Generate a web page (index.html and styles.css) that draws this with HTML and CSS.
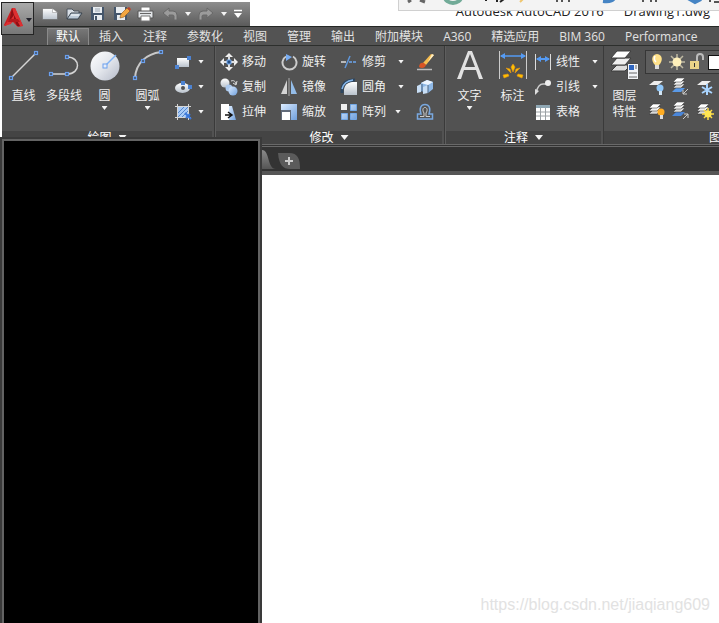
FILE: index.html
```html
<!DOCTYPE html>
<html lang="zh-CN">
<head>
<meta charset="utf-8">
<title>Autodesk AutoCAD 2016</title>
<link rel="stylesheet" href="styles.css">
</head>
<body>
<svg class="defs" aria-hidden="true">
  <defs>
    <linearGradient id="silver" x1="0" y1="0" x2="0" y2="1"><stop offset="0" stop-color="#fff"/><stop offset="1" stop-color="#b9c2cc"/></linearGradient>
    <linearGradient id="disc" x1="0" y1="0" x2="1" y2="1"><stop offset="0" stop-color="#fff"/><stop offset=".5" stop-color="#e3e6ec"/><stop offset="1" stop-color="#b4bac8"/></linearGradient>
    <linearGradient id="blue" x1="0" y1="0" x2="1" y2="1"><stop offset="0" stop-color="#dcecff"/><stop offset="1" stop-color="#6f9fdc"/></linearGradient>
    <linearGradient id="tabfill" x1="0" y1="0" x2="0" y2="1"><stop offset="0" stop-color="#8a8a8a"/><stop offset="1" stop-color="#555"/></linearGradient>
    <g id="node"><rect x="-1.5" y="-1.5" width="3" height="3" fill="#46566b" stroke="#6ba0ee" stroke-width="1.2"/></g>
    <g id="sheets">
      <path d="M4 8h8l-4 4H0z" fill="#d9d9d9" stroke="#333" stroke-width=".5"/>
      <path d="M4 5h8l-4 4H0z" fill="#eee" stroke="#333" stroke-width=".5"/>
      <path d="M4 2h8l-4 4H0z" fill="#fff" stroke="#333" stroke-width=".5"/>
    </g>
  </defs>
</svg>

<header class="titlebar">
  <nav class="quick">
    <button aria-label="新建"><svg width="18" height="16"><path d="M1.500 2.500h10l5 4v7h-15z" fill="url(#silver)" stroke="#666" stroke-width=".6"/><path d="M11.500 2.500l5 4h-5z" fill="#fff" stroke="#888" stroke-width=".5"/></svg></button>
    <button aria-label="打开"><svg width="18" height="16"><path d="M2 13V3h5l2 2h5v3H7z" fill="#d9dfe6" stroke="#4b535c"/><path d="M2 13l4-6h11l-4 6z" fill="#bdcbd9" stroke="#39434d"/><path d="M6 9h8" stroke="#fff"/></svg></button>
    <button aria-label="保存"><svg width="18" height="16"><path d="M2 1h13v13H2z" fill="#45566b"/><path d="M4 1h9v6H4zM5 9h8v5H5z" fill="#e9edf1"/><path d="M6 3h5M6 5h5" stroke="#9ca8b5"/><path d="M6 10h2v4H6z" fill="#45566b"/></svg></button>
    <button aria-label="另存为"><svg width="18" height="16"><path d="M1 1h13v13H1z" fill="#45566b"/><path d="M3 1h9v6H3zM4 9h8v5H4z" fill="#e9edf1"/><path d="M7 12l1-4 6-6 3 3-6 6z" fill="#f4a742" stroke="#8d581b" stroke-width=".6"/><path d="M14 2l3 3 1-2-2-2z" fill="#b9432e"/></svg></button>
    <button aria-label="打印"><svg width="18" height="16"><path d="M4 1h9v5H4z" fill="#fff" stroke="#777"/><path d="M1 5h15v7H1z" fill="#e2e5e8" stroke="#555"/><path d="M4 10h9v5H4z" fill="#fff" stroke="#777"/><path d="M3 7.500h11" stroke="#666"/></svg></button>
    <button aria-label="放弃"><svg width="18" height="16"><path d="M2 7l6-5v3h4q4 0 4 4v5h-3v-4q0-1-2-1H8v3z" fill="#9b9b9b" stroke="#686868"/></svg></button>
    <button class="drop" aria-label="放弃列表"><i class="caret"></i></button>
    <button aria-label="重做"><svg width="18" height="16"><path d="M16 7l-6-5v3H6q-4 0-4 4v5h3v-4q0-1 2-1h3v3z" fill="#9b9b9b" stroke="#686868"/></svg></button>
    <button class="drop" aria-label="重做列表"><i class="caret"></i></button>
    <button aria-label="自定义快速访问工具栏"><svg width="10" height="12"><path d="M1 2.500h8" stroke="#fff" stroke-width="1.500"/><path d="M1 5h8L5 10z" fill="#fff"/></svg></button>
  </nav>
  <h1 class="caption"><span>Autodesk AutoCAD 2016</span><span>Drawing1.dwg</span></h1>
</header>

<button class="app" aria-label="应用程序菜单">
  <svg width="30" height="28"><path d="M9 3h3l8 18-5 1-5-5-8 4-1-1z" fill="#c91f22"/><path d="M9 3l1 7-9 11 7-2 3-6 4 8 5 0L12 3z" fill="#dd2f31"/><path d="M9 3l2 7-5 7zM11 10l6 11-3 0-3-7z" fill="#8f1015"/><path d="M6 14h9l2 3H5z" fill="#b5191d"/><path d="M23 13h6l-3 4z" fill="#23232d"/></svg>
</button>

<nav class="tabs">
  <a class="active" href="#">默认</a><a href="#">插入</a><a href="#">注释</a><a href="#">参数化</a><a href="#">视图</a><a href="#">管理</a><a href="#">输出</a><a href="#">附加模块</a><a href="#">A360</a><a href="#">精选应用</a><a href="#">BIM 360</a><a href="#">Performance</a>
</nav>

<main class="ribbon">
  <section class="panel draw">
    <div class="tools">
      <button class="big"><svg width="32" height="32"><path d="M3 28L28 3" stroke="#d5d5d5" stroke-width="1.500"/><use href="#node" x="3" y="28"/><use href="#node" x="28" y="3"/></svg>直线</button>
      <button class="big mid"><svg width="32" height="32"><path d="M3 24h16c14 0 14-17 0-17" fill="none" stroke="#d5d5d5" stroke-width="1.500"/><use href="#node" x="3" y="24"/><use href="#node" x="19" y="24"/><use href="#node" x="19" y="7"/></svg>多段线</button>
      <button class="big"><svg width="32" height="32"><circle cx="16" cy="16" r="14.500" fill="url(#disc)"/><path d="M16 16L27 5" stroke="#7eb2f5" stroke-width="1.500"/><rect x="14" y="14" width="4" height="4" fill="#e7edf8" stroke="#6ba0ee"/></svg>圆<i class="caret"></i></button>
      <button class="big"><svg width="32" height="32"><path d="M3 28C4 13 14 4 29 2" fill="none" stroke="#c9c9c9" stroke-width="2"/><use href="#node" x="3" y="28"/><use href="#node" x="11" y="11"/><use href="#node" x="29" y="2"/></svg>圆弧<i class="caret"></i></button>
      <div class="stack">
        <button class="small" aria-label="矩形"><svg width="18" height="18"><path d="M3 5h12v9H3z" fill="url(#silver)"/><path d="M1 12h4v4H1zM13 3h4v4h-4z" fill="#4d83d2"/></svg><i class="caret"></i></button>
        <button class="small" aria-label="椭圆"><svg width="18" height="18"><ellipse cx="8.500" cy="10" rx="7.500" ry="5" fill="url(#silver)"/><path d="M7 3h4v4H7zM14 7h4v4h-4z" fill="#4d83d2"/><circle cx="9" cy="10" r="2" fill="#525252"/></svg><i class="caret"></i></button>
        <button class="small" aria-label="图案填充"><svg width="18" height="18"><path d="M3 3h11v12H3z" fill="#a9cbf7"/><path d="M4 10l6-6M4 14L14 4M8 14l6-6" stroke="#5587cc"/><path d="M3.500 1v16M14.500 1v16M1 3.500h16M1 14.500h16" stroke="#d6d6d6"/><path d="M11 10l6 6M12 15l4-4" stroke="#3977db" stroke-width="2"/></svg><i class="caret"></i></button>
      </div>
    </div>
    <h2>绘图<i class="caret wide"></i></h2>
  </section>

  <section class="panel modify">
    <div class="tools">
      <div class="stack">
        <button class="small"><svg width="18" height="18"><path d="M9 0l4 4H5zM9 18l4-4H5zM0 9l4-4v8zM18 9l-4-4v8z" fill="#f1f1f1"/><path d="M9 3v4M9 11v4M3 9h4M11 9h4" stroke="#ddd" stroke-width="2"/><path d="M7 7h4v4H7z" fill="#244d82" stroke="#76adf2"/></svg>移动</button>
        <button class="small"><svg width="18" height="18"><circle cx="5" cy="5" r="4.500" fill="url(#silver)"/><circle cx="9" cy="10" r="3.500" fill="#aac8ee"/><circle cx="13" cy="13" r="4.500" fill="url(#blue)"/><path d="M11 3c3-1 4 0 5 3M13 5l3 2 1-4" fill="none" stroke="#ddd"/></svg>复制</button>
        <button class="small"><svg width="18" height="18"><path d="M1 1h8v16H1z" fill="#fff"/><path d="M9 3l3 0 4 14H9z" fill="url(#blue)"/><path d="M5 12h7M8 9l4 3-4 3" fill="none" stroke="#111" stroke-width="1.500"/></svg>拉伸</button>
      </div>
      <div class="stack">
        <button class="small"><svg width="18" height="18"><path d="M6 3.500a7 7 0 1 0 7 0" fill="none" stroke="#ccc" stroke-width="2"/><path d="M6 1l6 3-6 4z" fill="#79aef4"/></svg>旋转</button>
        <button class="small"><svg width="18" height="18"><path d="M7 2v14H1z" fill="#d4d4d4"/><path d="M11 2v14h6z" fill="#94bde9"/><path d="M9 0v18" stroke="#aaa"/></svg>镜像</button>
        <button class="small"><svg width="18" height="18"><path d="M1 1h16v16H1z" fill="url(#blue)"/><path d="M1 7h10v10H1z" fill="#616b7a"/><path d="M2 9h8v8H2z" fill="#fff"/></svg>缩放</button>
      </div>
      <div class="stack">
        <button class="small"><svg width="18" height="18"><path d="M1 9h5" stroke="#ddd" stroke-width="1.500"/><path d="M5 15L10 3" stroke="#5f97db" stroke-width="1.500"/><path d="M9 9h8" stroke="#6ca7ef" stroke-width="1.500" stroke-dasharray="3 1"/></svg>修剪<i class="caret"></i></button>
        <button class="small"><svg width="18" height="18"><path d="M4 17V11Q5 5 12 4h5v13z" fill="url(#silver)"/><path d="M2 15V11Q3 2 15 2" fill="none" stroke="#2d4660" stroke-width="3"/><path d="M2 11Q4 3 13 2" fill="none" stroke="#88b9ee" stroke-width="1.500"/></svg>圆角<i class="caret"></i></button>
        <button class="small tight"><svg width="18" height="18"><path d="M1 1h6v6H1z" fill="#eee"/><path d="M10.500 1.500h6v6h-6zM1.500 10.500h6v6h-6zM10.500 10.500h6v6h-6z" fill="url(#blue)" stroke="#73a8e6"/></svg>阵列<i class="caret"></i></button>
      </div>
      <div class="stack">
        <button class="small" aria-label="删除"><svg width="18" height="18"><path d="M7 10L15 1l3 1-8 10z" fill="#f6bd4f"/><path d="M16 1l2 1-6 7z" fill="#fff0c8"/><path d="M3 14c0-4 3-5 5-4l2 2c-1 3-4 4-7 2z" fill="#d75425"/><path d="M1 16.500h15" stroke="#bbb" stroke-width="1.500"/></svg></button>
        <button class="small" aria-label="分解"><svg width="18" height="18"><path d="M5 5l6-3 6 2v7l-5 4-7-2z" fill="#8fb9e7"/><path d="M5 5l6-3 6 2-5 3z" fill="#edf5ff"/><path d="M1 8l4-2v8l-4 1zM7 9l5-2v8l-5 1z" fill="#c8def5"/><path d="M12 7v8M6 6v8" stroke="#4d6783"/></svg></button>
        <button class="small" aria-label="偏移"><svg width="18" height="18"><path d="M1.500 16v-5H5C3 5 5 1.500 9 1.500S15 5 13 11h3.500v5z" fill="none" stroke="#79a8df" stroke-width="1.500"/><path d="M4 13.500h4V10C6 7 7 4.500 9 4.500S12 7 10 10v3.500h4" fill="none" stroke="#ccc"/></svg></button>
      </div>
    </div>
    <h2>修改<i class="caret wide"></i></h2>
  </section>

  <section class="panel annotate">
    <div class="tools">
      <button class="big"><svg width="32" height="32"><path d="M3 29L14 1h4l11 28h-4l-3-9H10l-3 9zM11 17h10L16 4z" fill="#e1e1e1" fill-rule="evenodd"/></svg>文字<i class="caret"></i></button>
      <button class="big"><svg width="32" height="32"><path d="M2.500 1v28M29.500 1v28" stroke="#ccc"/><path d="M4 6h24" stroke="#559bf4" stroke-width="1.500"/><path d="M3 6l5-3v6zM29 6l-5-3v6z" fill="#559bf4"/><path d="M14 17l2-3 2 3-2 5zM9 18l4 1 1 4zM23 18l-4 1-1 4zM6 25l5-1 1 2-5 2zM26 25l-5-1-1 2 5 2z" fill="#ffc000" stroke="#e79516" stroke-width=".6"/></svg>标注</button>
      <div class="stack">
        <button class="small"><svg width="18" height="18"><path d="M1.500 1v16M16.500 1v16" stroke="#ddd"/><path d="M3 6h12" stroke="#559bf4" stroke-width="2"/><path d="M2 6l5-3v6zM16 6l-5-3v6z" fill="#559bf4"/></svg>线性<i class="caret"></i></button>
        <button class="small"><svg width="18" height="18"><path d="M2 15Q4 6 9 6h4" fill="none" stroke="#ccc" stroke-width="1.500"/><circle cx="14" cy="5" r="3" fill="#eee"/><path d="M1 17v-6l4 2z" fill="#ddd"/></svg>引线<i class="caret"></i></button>
        <button class="small"><svg width="18" height="18"><path d="M2 2h14v15H2z" fill="#fff"/><path d="M2 2h14v3H2z" fill="#8fa7b4"/><path d="M2 9h14M2 13h14M6.500 5v12M11.500 5v12" stroke="#9aa0a4"/></svg>表格</button>
      </div>
    </div>
    <h2>注释<i class="caret wide"></i></h2>
  </section>

  <section class="panel layers">
    <div class="tools">
      <button class="big props"><svg width="32" height="32"><path d="M8 15h14l-6 6H2z" fill="#ddd" stroke="#3d3d3d"/><path d="M8 8h14l-6 7H2z" fill="#eee" stroke="#3d3d3d"/><path d="M8 1h14l-6 7H2z" fill="#fff" stroke="#3d3d3d"/><path d="M18.500 13.500h11v16h-11z" fill="#f1f3f6" stroke="#4a4a4a"/><path d="M20 15h5v5h-5z" fill="#2f66c0"/><path d="M20 23h8M20 27h8M27 15v4" stroke="#666"/></svg>图层<br>特性</button>
      <div class="layerbox">
        <button class="combo" aria-label="图层">
          <svg width="18" height="18"><path d="M7 12C3 8 3 2 9 1c6 1 6 7 2 11z" fill="#ffe18a"/><path d="M7 3c-1 2-1 4 1 6" stroke="#fff" fill="none" stroke-width="1.500"/><path d="M7 12h4v4H7z" fill="#ddd"/></svg>
          <svg width="18" height="18"><path d="M9 1v16M1 9h16M3 3l12 12M15 3L3 15" stroke="#bfb9a2" stroke-width="1.500"/><circle cx="9" cy="9" r="4.500" fill="#fff0ba"/></svg>
          <svg width="18" height="18"><path d="M2 8h9v8H2z" fill="#ead488"/><path d="M9 8V4c0-4 6-4 6 0v3" stroke="#bcbcbc" stroke-width="2" fill="none"/><path d="M6 10h1v4H6z" fill="#333"/></svg>
          <span class="swatch"></span>
        </button>
        <div class="layergrid">
          <button aria-label="关"><svg width="18" height="18"><path d="M6 3h9l-5 4H1z" fill="#eee"/><circle cx="12" cy="10" r="3.500" fill="#8fc6f7"/><path d="M11 13h3v4h-3z" fill="#d1e5f5"/></svg></button>
          <button aria-label="隔离"><svg width="18" height="18"><path d="M4 10h9l-4 4H0z" fill="#5a9ae8"/><use href="#sheets" x="1" y="-2"/><path d="M16 11l-5 5M11 12v4h4" stroke="#ccc" fill="none"/></svg></button>
          <button aria-label="冻结"><svg width="18" height="18"><path d="M6 3h9l-5 4H1z" fill="#eee"/><path d="M11 6v11M6 9l10 6M16 9L6 15" stroke="#a9d4ff" stroke-width="2"/></svg></button>
          <button aria-label="打开所有图层"><svg width="18" height="18"><use href="#sheets" x="1"/><circle cx="13" cy="10" r="3.500" fill="#ffac22"/><path d="M12 13h3v4h-3z" fill="#ddd"/></svg></button>
          <button aria-label="取消隔离"><svg width="18" height="18"><path d="M4 10h9l-4 4H0z" fill="#4a86da"/><use href="#sheets" x="1" y="-2"/><path d="M11 17l5-5M12 12h4v4" stroke="#ccc" fill="none"/></svg></button>
          <button aria-label="解冻所有图层"><svg width="18" height="18"><use href="#sheets" x="1"/><path d="M12 6v12M6 12h12M8 8l8 8M16 8l-8 8" stroke="#ffdc43" stroke-width="1.500"/><circle cx="12" cy="12" r="3.500" fill="#ffe552"/></svg></button>
        </div>
      </div>
    </div>
    <h2>图层<i class="caret wide"></i></h2>
  </section>
</main>

<div class="filetabs">
  <svg width="36" height="24"><path d="M0 3h22c8 0 5 19 14 19H0z" fill="url(#tabfill)"/></svg>
  <button aria-label="新图形"><svg width="26" height="24"><path d="M2 6h11c9 0 11 6 11 16H14C7 22 3 18 2 6z" fill="#5b5b5b"/><path d="M13 10v8M9 14h8" stroke="#ccc" stroke-width="2"/></svg></button>
</div>

<section class="canvas"><p class="watermark">https://blog.csdn.net/jiaqiang609</p></section>

<div class="window"></div>

<div class="floatbar">
  <svg width="321" height="11"><path d="M12 0l-3 2M21 0l5 2" stroke="#666" stroke-width="3"/><path d="M46-3a8 6 0 0 0 16 0" fill="none" stroke="#72ab98" stroke-width="4"/><path d="M87 0v1M98-1v3M105-1l-4 3" stroke="#222" stroke-width="2"/><path d="M124-1l-3 3" stroke="#efc66f" stroke-width="2"/><path d="M158-1v3M163-1v3M170-1v3" stroke="#222" stroke-width="1.500"/><path d="M204 1c8 1 10-1 12-4" fill="none" stroke="#4584c4" stroke-width="4"/><path d="M244-1v3M252-1v3M257-1v3" stroke="#222" stroke-width="1.500"/><path d="M289-2l7 4 6-3" fill="none" stroke="#4584c4" stroke-width="4"/><path d="M311-1v3M315 2h8" stroke="#222" stroke-width="1.500"/></svg>
</div>
</body>
</html>
```
FILE: styles.css
```css
* { box-sizing: border-box; }
body {
  margin: 0;
  min-height: 100vh;
  display: flex;
  flex-direction: column;
  position: relative;
  overflow: hidden;
  background: #fff;
  color: #f0f0f0;
  font: 12px/16px "Open Sans", "Noto Sans CJK SC", sans-serif;
}
.defs { position: absolute; width: 0; height: 0; }
svg { display: block; flex: none; }
button {
  margin: 0;
  padding: 0;
  border: 0;
  background: none;
  color: inherit;
  font: inherit;
}
h1, h2, p { margin: 0; font-weight: normal; }
.caret {
  display: block;
  flex: none;
  width: 6px;
  height: 4px;
  background: #f4f4f4;
  clip-path: polygon(0 0, 100% 0, 50% 100%);
}
.caret.wide { width: 8px; height: 5px; }

.titlebar { display: flex; height: 26px; }
.quick {
  display: flex;
  align-items: center;
  width: 248px;
  margin: 2px 0 0 2px;
  padding-left: 39px;
  background: linear-gradient(#8e8e8e, #777 45%, #5b5b5b);
  flex: none;
}
.quick button { margin-right: 6px; }
.caption {
  display: flex;
  gap: 20px;
  margin-left: auto;
  padding: 2px 9px 0 0;
  color: #222;
  font-size: 13px;
  line-height: 18px;
  white-space: nowrap;
}
.app {
  position: absolute;
  left: 1px;
  top: 2px;
  width: 33px;
  height: 33px;
  padding: 1px;
  border: 1px solid #242424;
  background: linear-gradient(#aaa, #777);
  z-index: 2;
}

.tabs {
  display: flex;
  align-items: flex-end;
  height: 20px;
  margin-left: 2px;
  padding-left: 45px;
  border-top: 1px solid #252825;
  border-bottom: 1px solid #2d2f2d;
  background: #535353;
}
.tabs a {
  flex: none;
  padding: 0 10px;
  color: #e2e2e2;
  line-height: 17px;
  text-decoration: none;
}
.tabs .active {
  padding: 0 8px;
  border: 1px solid #8a8a8a;
  border-bottom: 0;
  background: linear-gradient(#777, #5a5a5a);
  color: #fff;
  line-height: 16px;
}

.ribbon {
  display: flex;
  height: 98px;
  margin-left: 2px;
  overflow: hidden;
  background: #525252;
}
.panel {
  display: flex;
  flex: none;
  flex-direction: column;
  border-right: 1px solid #3a3a3a;
}
.draw { width: 213px; }
.modify { width: 230px; border-left: 1px solid #5e5e5e; }
.annotate { width: 159px; border-left: 1px solid #5e5e5e; }
.layers { width: 252px; }
.tools { display: flex; flex: 1; padding-top: 3px; }
.panel h2 {
  display: flex;
  align-items: center;
  justify-content: center;
  gap: 7px;
  height: 13px;
  margin-right: 2px;
  background: #444;
  color: #fff;
  font-size: 12px;
}
.big {
  display: flex;
  flex: none;
  flex-direction: column;
  align-items: center;
  width: 43px;
  padding-top: 1px;
  line-height: 16px;
}
.big svg { margin-bottom: 6px; }
.big .caret { margin-top: 2px; }
.big.mid { width: 38px; }
.stack { display: flex; flex: none; flex-direction: column; }
.small {
  display: flex;
  align-items: center;
  height: 25px;
  gap: 4px;
}
.small .caret { margin-left: 8px; }
.small.tight .caret { margin-left: 5px; }
.draw .stack { padding-left: 5px; }
.draw .small .caret { margin-left: 2px; }
.modify .tools { padding-left: 4px; }
.modify .stack { width: 60px; }
.modify .stack:nth-child(3) { width: 76px; }
.modify .stack:last-child { width: auto; }
.annotate .tools { padding-left: 2px; }
.props { width: 41px; }

.layerbox { flex: 1; }
.combo {
  display: flex;
  align-items: center;
  gap: 2px;
  width: 100%;
  height: 24px;
  margin-top: 1px;
  padding-left: 2px;
  border: 1px solid #363636;
  background: #5d5d5d;
}
.swatch { width: 18px; height: 15px; background: #fff; border: 1px solid #111; }
.layergrid {
  display: grid;
  grid-template-columns: repeat(3, 24px);
  grid-auto-rows: 24px;
  padding: 1px 0 0 3px;
}
.layergrid button { display: flex; align-items: center; }

.filetabs {
  display: flex;
  height: 31px;
  padding-left: 240px;
  border-top: 3px double #696969;
  border-bottom: 4px solid #565656;
  background: #333;
}
.canvas { position: relative; flex: 1; background: #fff; }
.watermark {
  position: absolute;
  right: 9px;
  bottom: 9px;
  color: #e2e2e2;
  font: 16px/18px "Liberation Sans", sans-serif;
}
.window {
  position: absolute;
  left: 0;
  top: 137px;
  bottom: 0;
  width: 262px;
  border: solid #3a3a3a;
  border-width: 2px 2px 0;
  background: #000;
  box-shadow: inset 2px 2px #636363, inset -2px 0 #636363;
}
.floatbar {
  position: absolute;
  left: 398px;
  right: 0;
  top: 0;
  height: 11px;
  overflow: hidden;
  border: solid #d0d0d0;
  border-width: 0 0 1px 1px;
  background: #f3f3f3;
}
```
